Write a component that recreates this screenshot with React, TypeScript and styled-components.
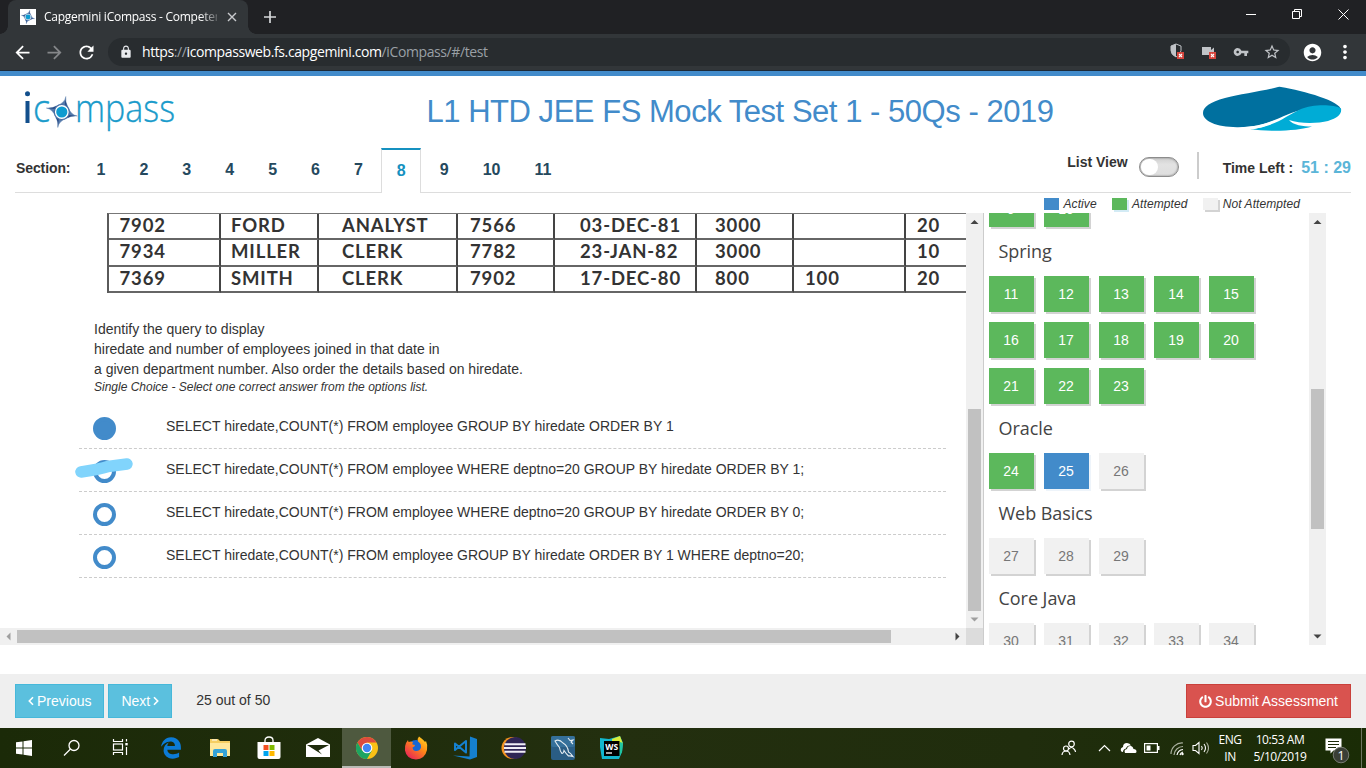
import React from "react";
import styled, { createGlobalStyle, css } from "styled-components";
import {
  MdAccountCircle,
  MdArrowBack,
  MdArrowForward,
  MdLock,
  MdMoreVert,
  MdRefresh,
  MdStarBorder,
  MdVpnKey,
} from "react-icons/md";
import { FaPowerOff } from "react-icons/fa";

const sans = `"Liberation Sans", Arial, sans-serif`;
const ui = `"Open Sans", "Noto Sans", sans-serif`;

const GlobalStyle = createGlobalStyle`
  * { box-sizing: border-box; }
  html, body { margin: 0; padding: 0; overflow: hidden; }
  body { font-family: ${sans}; font-size: 14px; color: #333; background: #fff; }
  svg { display: block; flex: none; }
`;

const Screen = styled.div`
  width: 1366px;
  height: 768px;
  display: flex;
  flex-direction: column;
  overflow: hidden;
  background: #fff;
`;

/* ---------- browser chrome ---------- */

const TabStrip = styled.div`
  flex: none;
  height: 34px;
  background: #202124;
  display: flex;
  color: #fff;
  font-family: ${ui};
`;

const BrowserTab = styled.div`
  position: relative;
  width: 240px;
  height: 34px;
  margin-left: 8px;
  padding: 0 11px 0 12px;
  border-radius: 8px 8px 0 0;
  background: #323639;
  display: flex;
  align-items: center;
  &::before, &::after {
    content: "";
    position: absolute;
    bottom: 0;
    width: 8px;
    height: 8px;
  }
  &::before { left: -8px; background: radial-gradient(circle at 0 0, transparent 7.5px, #323639 8px); }
  &::after { right: -8px; background: radial-gradient(circle at 100% 0, transparent 7.5px, #323639 8px); }
`;

const TabTitle = styled.span`
  flex: 1;
  margin: 0 10px 0 8px;
  overflow: hidden;
  white-space: nowrap;
  font-size: 12px;
  line-height: 18px;
  letter-spacing: -0.26px;
  mask-image: linear-gradient(90deg, #000 156px, transparent 178px);
`;

const NewTab = styled.div`
  margin-left: 16px;
  display: flex;
  align-items: center;
`;

const WindowControls = styled.div`
  margin-left: auto;
  display: flex;
  height: 28px;
`;

const WindowControl = styled.div`
  width: 46px;
  display: flex;
  align-items: center;
  justify-content: center;
`;

const Toolbar = styled.div`
  flex: none;
  height: 37px;
  background: #323639;
  border-bottom: 1px solid #1c2a38;
  display: flex;
  align-items: center;
  color: #fff;
`;

const NavButton = styled.div<{ $dim?: boolean }>`
  width: 32px;
  display: flex;
  justify-content: center;
  color: ${(p) => (p.$dim ? "#85878a" : "#fff")};
`;

const NavButtons = styled.div`
  display: flex;
  padding-left: 6px;
  width: 108px;
`;

const AddressBar = styled.div`
  width: 1182px;
  height: 28px;
  border-radius: 14px;
  background: #282c2f;
  display: flex;
  align-items: center;
  padding: 0 9px 0 11px;
  font-family: ${ui};
  font-size: 14px;
`;

const Url = styled.span`
  margin: 0 0 1px 9px;
  white-space: nowrap;
  color: #9aa0a6;
  letter-spacing: -0.4px;
  b { font-weight: 400; color: #fff; }
`;

const AddressIcons = styled.div`
  margin-left: auto;
  display: flex;
  align-items: center;
  gap: 14px;
  color: #c0c3c7;
`;

const ToolbarEnd = styled.div`
  display: flex;
  align-items: center;
  padding-left: 11.5px;
  gap: 11px;
`;

/* ---------- page header ---------- */

const Page = styled.div`
  flex: none;
  height: 657px;
  border-top: 5px solid #428bca;
  display: flex;
  flex-direction: column;
`;

const Header = styled.header`
  flex: none;
  height: 72px;
  display: flex;
  align-items: flex-start;
  padding: 0 24px 0 20px;
`;

const Title = styled.h1`
  flex: 1;
  margin: 17px 0 0;
  padding-left: 98px;
  text-align: center;
  font-weight: 400;
  font-size: 31px;
  line-height: 38px;
  letter-spacing: -0.47px;
  color: #428bca;
  white-space: nowrap;
`;

const SectionBar = styled.nav`
  flex: none;
  height: 45px;
  margin: 0 15px;
  border-bottom: 1px solid #ddd;
  display: flex;
`;

const SectionLabel = styled.div`
  width: 66px;
  padding: 12px 0 0 1px;
  line-height: 16px;
  font-weight: 700;
  font-size: 14px;
  letter-spacing: -0.1px;
`;

const SectionTab = styled.div<{ $active?: boolean }>`
  height: 45px;
  margin-right: 3px;
  padding: ${(p) => (p.$active ? "12px" : "11px")} 14.5px 0;
  border: 1px solid transparent;
  border-top-width: 2px;
  border-bottom: 0;
  font-weight: 700;
  font-size: 16px;
  line-height: 18px;
  color: #25495e;
  ${(p) =>
    p.$active &&
    css`
      border-color: #ddd;
      border-top-color: #1591c0;
      background: #fff;
      color: #1591c0;
    `}
`;

const BarEnd = styled.div`
  margin-left: auto;
  display: flex;
  font-weight: 700;
`;

const ListViewLabel = styled.span`
  margin-top: 6px;
  line-height: 16px;
`;

const Toggle = styled.div`
  width: 40px;
  height: 20px;
  margin: 9px 18px 0 11px;
  border: 1px solid #8c8c8c;
  border-radius: 10px;
  background: linear-gradient(#cfcfcf, #e2e2e2 35%, #dedede);
  box-shadow: inset 0 0 2px #777;
  &::before {
    content: "";
    display: block;
    width: 17px;
    height: 16px;
    margin: 1px;
    border-radius: 8px;
    background: #fff;
  }
`;

const Divider = styled.div`
  width: 2px;
  height: 27px;
  margin-top: 4px;
  background: #ccc;
`;

const TimeLeft = styled.div`
  margin: 11px 0 0 24px;
  line-height: 18px;
  display: flex;
  white-space: nowrap;
`;

const Countdown = styled.span`
  margin-left: 8px;
  font-size: 16px;
  line-height: 17px;
  color: #5bb5d8;
`;

const Legend = styled.div`
  flex: none;
  height: 20px;
  padding: 4px 66px 0 0;
  display: flex;
  justify-content: flex-end;
  font-style: italic;
  font-size: 12px;
  line-height: 14px;
  letter-spacing: 0.08px;
`;

type TileState = "active" | "done" | "open";

const tileColors: Record<TileState, { bg: string; fg: string; shadow: string }> = {
  active: { bg: "#428bca", fg: "#fff", shadow: "#eef4fa" },
  done: { bg: "#5cb85c", fg: "#fff", shadow: "#d3d3d3" },
  open: { bg: "#f1f1f1", fg: "#777", shadow: "#d3d3d3" },
};

const LegendItem = styled.span<{ $state: TileState }>`
  display: flex;
  margin-left: ${(p) => (p.$state === "active" ? 0 : 15.3)}px;
  &::before {
    content: "";
    width: 15px;
    height: 12px;
    margin-top: 1px;
    margin-right: 5px;
    background: ${(p) => tileColors[p.$state].bg};
    box-shadow: ${(p) =>
      p.$state === "active" ? "none" : p.$state === "done" ? "2px 2px #d3ebf5" : "2px 2px #d3d3d3"};
  }
`;

/* ---------- question area ---------- */

const Body = styled.main`
  flex: none;
  height: 432px;
  display: flex;
  overflow: hidden;
`;

const QuestionPane = styled.section`
  width: 984px;
  height: 432px;
  border-right: 1px solid #ccc;
  display: grid;
  grid-template: 415px 17px / 966px 17px;
`;

const QuestionContent = styled.div`
  overflow: hidden;
`;

const DataTable = styled.div`
  width: 1000px;
  margin-left: 107px;
  display: grid;
  grid-template-columns: 112px 98px 139px 97px 142px 97px 112px 100px;
  grid-template-rows: 26px 27px 26px;
  border-left: 2px solid #5a5a5a;
  border-top: 1px solid #777;
  font-family: Lato, sans-serif;
  font-weight: 700;
  font-size: 18.5px;
  letter-spacing: 0.85px;
  color: #333;
`;

const Cell = styled.div<{ $indent: number }>`
  padding-left: ${(p) => p.$indent}px;
  border-right: 2px solid #444;
  border-bottom: 2px solid #666;
  line-height: 23px;
  white-space: nowrap;
`;

const QuestionText = styled.p`
  margin: 26px 0 0 94px;
  line-height: 20px;
`;

const Hint = styled.p`
  margin: 0 0 0 94px;
  font-size: 12px;
  line-height: 16px;
  font-style: italic;
`;

const Options = styled.div`
  margin: 10.5px 20px 0 79px;
`;

const Option = styled.div`
  position: relative;
  height: 43px;
  padding-left: 14px;
  display: flex;
  border-bottom: 1px dashed #ccc;
`;

const Radio = styled.span<{ $checked?: boolean }>`
  width: 23px;
  height: 23px;
  margin: 11px 50px 0 0;
  border-radius: 50%;
  border: 4px solid #428bca;
  background: ${(p) => (p.$checked ? "#428bca" : "#fff")};
`;

const OptionText = styled.span`
  margin-top: 10px;
  line-height: 20px;
  letter-spacing: 0.01px;
  white-space: nowrap;
`;

const Marker = styled.svg`
  position: absolute;
  left: -6px;
  top: 6px;
`;

/* ---------- scrollbars ---------- */

const Track = styled.div<{ $horizontal?: boolean }>`
  display: flex;
  flex-direction: ${(p) => (p.$horizontal ? "row" : "column")};
  align-items: center;
  justify-content: space-between;
  background: #f0f0f0;
  ${(p) => (p.$horizontal ? "height: 17px;" : "width: 17px;")}
`;

const Thumb = styled.div<{ $horizontal?: boolean; $length: number; $offset: number }>`
  background: #c1c1c1;
  ${(p) =>
    p.$horizontal
      ? css`height: 13px; width: ${p.$length}px; margin-left: ${p.$offset}px; margin-right: auto;`
      : css`width: 13px; height: ${p.$length}px; margin-top: ${p.$offset}px; margin-bottom: auto;`}
`;

const Corner = styled.div`
  background: #dcdcdc;
`;

type Dir = "up" | "down" | "left" | "right";
const arrowPoints: Record<Dir, string> = {
  up: "4.5,11 8.5,7 12.5,11",
  down: "4.5,6.5 8.5,10.5 12.5,6.5",
  left: "10.5,4.5 6.5,8.5 10.5,12.5",
  right: "6.5,4.5 10.5,8.5 6.5,12.5",
};
const Arrow = ({ dir, dim }: { dir: Dir; dim?: boolean }) => (
  <svg width="17" height="17">
    <polygon points={arrowPoints[dir]} fill={dim ? "#9f9f9f" : "#444"} />
  </svg>
);

/* ---------- palette of questions ---------- */

const Palette = styled.aside`
  width: 325px;
  height: 432px;
  padding-left: 5px;
  overflow: hidden;
`;

const TileGrid = styled.div<{ $clipped?: boolean }>`
  display: grid;
  grid-template-columns: repeat(5, 45px);
  grid-auto-rows: 36px;
  gap: 10px;
  ${(p) => p.$clipped && "margin-top: -22px;"}
`;

const Tile = styled.div<{ $state: TileState }>`
  padding-right: 1px;
  line-height: 36px;
  text-align: center;
  background: ${(p) => tileColors[p.$state].bg};
  color: ${(p) => tileColors[p.$state].fg};
  box-shadow: 2px 2px ${(p) => tileColors[p.$state].shadow};
`;

const TopicName = styled.h2`
  height: 49px;
  margin: 0;
  padding-left: 9.5px;
  font-family: ${ui};
  font-weight: 400;
  font-size: 18px;
  line-height: 48px;
  letter-spacing: -0.04px;
  color: #444;
`;

/* ---------- footer ---------- */

const Footer = styled.footer`
  flex: none;
  height: 54px;
  margin-top: 29px;
  padding: 0 15px;
  background: #efefef;
  display: flex;
  align-items: center;
`;

const Button = styled.button<{ $danger?: boolean }>`
  height: 34px;
  margin: 0 4px 0 0;
  padding: 0 12px;
  border: 1px solid ${(p) => (p.$danger ? "#c9403b" : "#46b8da")};
  background: ${(p) => (p.$danger ? "#d9534f" : "#5bc0de")};
  color: #fff;
  font: 14px/20px ${sans};
  display: flex;
  align-items: center;
  gap: ${(p) => (p.$danger ? 3.5 : 3)}px;
  white-space: nowrap;
  ${(p) => p.$danger && "margin: 0 0 0 auto;"}
`;

const Progress = styled.span`
  margin: 0 0 2px 20px;
`;

/* ---------- taskbar ---------- */

const Taskbar = styled.div`
  flex: none;
  height: 40px;
  background: linear-gradient(90deg, #1b2a08, #232f0f 45%, #202d0d 75%, #1a2c06);
  display: flex;
  color: #fff;
  font-family: ${ui};
`;

const SystemButton = styled.div`
  width: 48px;
  display: flex;
  align-items: center;
  justify-content: center;
`;

const AppButton = styled.div<{ $current?: boolean }>`
  width: 49px;
  display: flex;
  align-items: center;
  justify-content: center;
  ${(p) => p.$current && "background: #4e593f; box-shadow: inset 0 -2px #b9bbb6;"}
`;

const Apps = styled.div`
  display: flex;
  margin-left: 2px;
`;

const Tray = styled.div`
  margin-left: auto;
  display: flex;
  align-items: center;
`;

const TrayCell = styled.div<{ $width: number }>`
  width: ${(p) => p.$width}px;
  display: flex;
  justify-content: center;
`;

const TrayText = styled.div<{ $width: number }>`
  width: ${(p) => p.$width}px;
  text-align: center;
  font-size: 12px;
  line-height: 17px;
  letter-spacing: -0.42px;
  white-space: nowrap;
`;

const DesktopEdge = styled.div`
  width: 5px;
  height: 40px;
  border-left: 1px solid #6b7560;
`;

/* ---------- drawings ---------- */

const Star = ({ cx, cy, s }: { cx: number; cy: number; s: number }) => (
  <g transform={`translate(${cx} ${cy}) scale(${s})`}>
    <path
      d="M4-15.500Q3.500-9 6-5.500Q9 3 15.500 4Q9 3.500 5.500 6Q-3 9-4 15.500Q-3.500 9-6 5.500Q-9-3-15.500-4Q-9-3.500-5.500-6Q3-9 4-15.500Z"
      fill="#5479ab"
      stroke="#7d9abf"
      strokeWidth="0.500"
    />
    <path
      d="M4-15.500Q3.500-9 6-5.500L3-7ZM15.500 4Q9 3.500 5.500 6L7 3ZM-4 15.500Q-3.500 9-6 5.500L-3 7ZM-15.500-4Q-9-3.500-5.500-6L-7-3Z"
      fill="#274a85"
    />
    <circle r="7.500" fill="#fff" stroke="#476da3" strokeWidth="1.200" />
    <circle r="5.600" fill="#0d9bd0" />
  </g>
);

const Logo = () => (
  <svg width="160" height="72" viewBox="20 76 160 72">
    <circle cx="27.500" cy="93.800" r="2.500" fill="#124f8c" />
    <rect x="25.500" y="101" width="4" height="22" fill="#124f8c" />
    <g fontFamily="Open Sans" fontWeight="300" fontSize="39" fill="#1a9bcb" stroke="#1a9bcb" strokeWidth="0.350">
      <text x="33" y="122" textLength="17" lengthAdjust="spacingAndGlyphs">c</text>
      <text x="75" y="122" textLength="100" lengthAdjust="spacingAndGlyphs">mpass</text>
    </g>
    <Star cx={61.8} cy={112} s={1} />
  </svg>
);

const Brand = () => (
  <svg width="140" height="72" viewBox="1202 76 140 72">
    <path d="M1278 87 C1264 91 1240 94 1225 98 C1210 102 1203 107 1203 113 C1203 121 1216 127 1237 127.200 C1270 127.500 1283 113 1306 109 C1322 106 1336 106 1341 110 C1341 101 1304 91 1281 87Q1279.500 86.600 1278 87Z" fill="#00709f" />
    <path d="M1341 108.500 C1334 104 1312 104 1301 109 C1285 116 1277 126.500 1250 129 C1270 132 1298 131 1312 126.500 C1303 126.500 1293 125 1289 120 C1300 124 1318 123.500 1328 121 C1338 118 1342 114 1341 108.500Z" fill="#00acd6" />
    <path d="M1240 127.200 C1255 127 1265 124.500 1274 120.500 C1268 125.500 1262 128 1253 129.200 L1250 128.500Z" fill="#fff" />
  </svg>
);

const BlockedBadge = () => (
  <g>
    <rect x="8" y="9" width="7" height="7" fill="#d6453d" />
    <path d="M10 11l3 3M13 11l-3 3" stroke="#fff" strokeWidth="1.100" />
  </g>
);

const WindowsIcon = () => (
  <svg width="16" height="16" fill="#fff">
    <path d="M0 2.300l6.500-.9v6.100H0zM7.500 1.200L16 0v7.500H7.500zM0 8.500h6.500v6.100L0 13.700zM7.500 8.500H16V16l-8.500-1.200z" />
  </svg>
);

const SearchIcon = () => (
  <svg width="18" height="18" fill="none" stroke="#fff" strokeWidth="1.300">
    <circle cx="11" cy="6.500" r="5" />
    <path d="M7.500 10L1 16.500" />
  </svg>
);

const TaskViewIcon = () => (
  <svg width="18" height="18" viewBox="-1 1 18 18" fill="none" stroke="#fff" strokeWidth="1.200">
    <path d="M1.500 1v2.500h9V1M1.500 17v-2.500h9V17M14.500 1v2.500M14.500 9v8" />
    <rect x="1.500" y="6" width="9" height="6" />
    <rect x="13.300" y="5" width="2.400" height="2.400" fill="#fff" stroke="none" />
  </svg>
);

const BrowserIcon = () => (
  <svg width="22" height="22" viewBox="0 0 512 512" fill="#0c7bd6">
    <path d="M486.290 243.670c0-44-7.760-84.460-28.810-122.400C416.500 47.880 343.910 8 258.890 8 119 7.720 40.620 113.210 26.060 227.680c42.420-61.310 117.070-121.380 220.370-125 0 0 109.670 0 99.420 105H170c6.370-37.390 18.550-59 34.340-78.930-75.050 34.900-121.850 96.100-120.750 188.320.83 71.450 50.130 144.840 120.750 172 83.350 31.840 192.770 7.200 240.130-21.330V363.310C363.600 419.800 173.600 424.230 172.210 295.740H486.290z" />
  </svg>
);

const ExplorerIcon = () => (
  <svg width="22" height="20">
    <path d="M1 1h8l2 2h10v15H1z" fill="#f5ce62" />
    <path d="M1 5h20v13H1z" fill="#ffe89c" />
    <path d="M4 19v-6q0-2 2-2h10q2 0 2 2v6h-4v-4H8v4z" fill="#35a3d8" />
    <path d="M3 2h5" stroke="#fff" />
  </svg>
);

const StoreIcon = () => (
  <svg width="24" height="24">
    <path d="M8 6V4.500Q8 1 12 1t4 3.500V6" fill="none" stroke="#fff" strokeWidth="1.300" />
    <path d="M.5 6h23v15q0 2-2 2h-19q-2 0-2-2z" fill="#fff" />
    <path d="M6.500 9h5v5h-5z" fill="#f25022" />
    <path d="M12.500 9h5v5h-5z" fill="#7fba00" />
    <path d="M6.500 15h5v5h-5z" fill="#00a4ef" />
    <path d="M12.500 15h5v5h-5z" fill="#ffb900" />
  </svg>
);

const MailIcon = () => (
  <svg width="24" height="20">
    <path d="M0 6.500L12 0l12 6.500V19H0z" fill="#fff" />
    <path d="M1 7h22l-10.500 5.500 3.500 4z" fill="#1f2c0c" />
  </svg>
);

const ChromeIcon = () => (
  <svg width="22" height="22" viewBox="-11 -11 22 22">
    <circle r="11" fill="#fbc116" />
    <path d="M-9.530-5.500A11 11 0 0 1 9.530-5.500L0-5.500 L-4.760 2.750Z" fill="#dd4b3e" />
    <path d="M-9.530-5.500A11 11 0 0 0 0 11L4.760 2.750-4.760 2.750Z" fill="#1da462" />
    <circle r="5.300" fill="#fff" />
    <circle r="4.200" fill="#4285f4" />
  </svg>
);

const FirefoxIcon = () => (
  <svg width="24" height="24" viewBox="0 0 24 24">
    <defs>
      <linearGradient id="fox" x1="1" y1="0" x2="0.200" y2="1">
        <stop offset="0" stopColor="#ffe226" />
        <stop offset="0.450" stopColor="#ff8a16" />
        <stop offset="1" stopColor="#e8205a" />
      </linearGradient>
    </defs>
    <circle cx="12" cy="12" r="8" fill="#1767d3" />
    <path d="M2 7l2-3 .5 2Q7 5 9 6q-1 1.500-.5 2.500l2.500.5q0 1.500-2.500 2.500Q9 15 12 15q4 0 5-3.500.5-4-3-6Q13 2.500 15 .5 20 4 21 6l1-1q2 4 1 9-2 9-11 9.500Q2.500 23 1 14.500.5 10 2 7z" fill="url(#fox)" />
  </svg>
);

const CodeIcon = () => (
  <svg width="24" height="24">
    <path d="M17 .5L24 3v18l-7 2.500-17-4 16.500 1z" fill="#1580cf" />
    <path d="M2 7.500l11 9V5L2 14z" fill="none" stroke="#1580cf" strokeWidth="2" strokeLinejoin="round" />
  </svg>
);

const EclipseIcon = () => (
  <svg width="26" height="24">
    <circle cx="11.500" cy="12" r="11" fill="#f39320" />
    <circle cx="14" cy="12" r="11" fill="#2f2555" />
    <path d="M3.500 8.300h21M3 12h22M3.500 15.700h21" stroke="#f1eef6" strokeWidth="2" />
  </svg>
);

const DolphinIcon = () => (
  <svg width="24" height="24">
    <rect width="24" height="24" rx="2" fill="#2a5d84" />
    <rect width="24" height="11" rx="2" fill="#35709a" />
    <path d="M4 5q4-2.500 8 2 5 3 5.500 9 2 1 4.500 4.500-2.500-1-4.500-.5-3-3-4.500-5.500-.5 3-2 3-2-2-2.500-6-2.500-3-4.500-6.500zM17 2l2 2.500 3-.5-2 2 2 2" fill="none" stroke="#e5edf2" strokeWidth="1.100" />
  </svg>
);

const StormIcon = () => (
  <svg width="26" height="24">
    <path d="M1 2l9 1L21 0l3 7-1 9-3 7H3L1 11z" fill="#12b7ce" />
    <path d="M13 3l8-3 3 8-4 2-7-1z" fill="#d9ed38" />
    <path d="M21 6l3 1-1 9-3 5z" fill="#22c6a0" />
    <rect x="5" y="5" width="15.500" height="15" fill="#000" />
    <text x="6.200" y="13.500" fill="#fff" fontFamily="Open Sans" fontWeight="700" fontSize="8.500" textLength="13">WS</text>
    <path d="M7 17h6" stroke="#fff" strokeWidth="1.300" />
  </svg>
);

const PeopleIcon = () => (
  <svg width="16" height="16" fill="none" stroke="#fff" strokeWidth="1.200">
    <circle cx="10.500" cy="4" r="2.800" />
    <path d="M8 9q2.500-3 5 0 1.500 1.500 1.500 3" />
    <circle cx="5" cy="8.500" r="2.500" />
    <path d="M1 15q.5-4 4-4t4 4" />
  </svg>
);

const WifiIcon = () => (
  <svg width="15" height="15" viewBox="-1 0 15 15" fill="none" strokeWidth="1.200">
    <path d="M1 13A11 11 0 0 1 13 2M4 14A9 9 0 0 1 13 5.500" stroke="#aab09f" />
    <path d="M7 14A7 7 0 0 1 13 8.500M10 14a4 4 0 0 1 3-3" stroke="#fff" />
    <circle cx="12.500" cy="13" r="1.200" fill="#fff" />
  </svg>
);

const SoundIcon = () => (
  <svg width="18" height="14" viewBox="-1 0 18 14" fill="none" stroke="#fff" strokeWidth="1.100">
    <path d="M1 4.500h2.500L7 1.500v11L3.500 9.500H1zM9.500 5q1.500 2 0 4M12 3q3 4 0 8" />
    <path d="M14.500 1.500q4 5.500 0 11" stroke="#aab09f" />
  </svg>
);

const NoticeIcon = () => (
  <svg width="26" height="32" viewBox="0 -1 26 32">
    <path d="M1.500 5.500h16v12H9.500l-3 3v-3h-5z" fill="#fff" />
    <path d="M4 8.500h11M4 11.500h11M4 14.500h8" stroke="#1c2b0a" strokeWidth="1.100" />
    <circle cx="17" cy="22" r="7.800" fill="#3a3f36" stroke="#777b72" />
    <text x="17" y="26.500" textAnchor="middle" fill="#fff" fontFamily="Open Sans" fontSize="12.500">1</text>
  </svg>
);

const Chevron = ({ left }: { left?: boolean }) => (
  <svg width="6" height="10" viewBox="0 0 6 10" fill="none" stroke="#fff" strokeWidth="1.600">
    <path d={left ? "M5 1.200L1.300 5 5 8.800" : "M1 1.200L4.700 5 1 8.800"} />
  </svg>
);

/* ---------- data ---------- */

const rows = [
  ["7902", "FORD", "ANALYST", "7566", "03-DEC-81", "3000", "", "20"],
  ["7934", "MILLER", "CLERK", "7782", "23-JAN-82", "3000", "", "10"],
  ["7369", "SMITH", "CLERK", "7902", "17-DEC-80", "800", "100", "20"],
];
const indents = [10.5, 10, 23, 12, 25, 18, 11, 11];

const options = [
  "SELECT hiredate,COUNT(*) FROM employee GROUP BY hiredate ORDER BY 1",
  "SELECT hiredate,COUNT(*) FROM employee WHERE deptno=20 GROUP BY hiredate ORDER BY 1;",
  "SELECT hiredate,COUNT(*) FROM employee WHERE deptno=20 GROUP BY hiredate ORDER BY 0;",
  "SELECT hiredate,COUNT(*) FROM employee GROUP BY hiredate ORDER BY 1 WHERE deptno=20;",
];

const topics = [
  { name: "", from: 9, to: 10 },
  { name: "Spring", from: 11, to: 23 },
  { name: "Oracle", from: 24, to: 26 },
  { name: "Web Basics", from: 27, to: 29 },
  { name: "Core Java", from: 30, to: 34 },
];

const stateOf = (n: number): TileState => (n < 25 ? "done" : n === 25 ? "active" : "open");
const range = (a: number, b: number) => Array.from({ length: b - a + 1 }, (_, i) => a + i);

export default function App() {
  return (
    <Screen>
      <GlobalStyle />
      <TabStrip>
        <BrowserTab>
          <svg width="16" height="16" viewBox="-18 -18 36 36">
            <rect x="-18" y="-18" width="36" height="36" fill="#fff" />
            <Star cx={0} cy={0} s={1} />
          </svg>
          <TabTitle>Capgemini iCompass - Competency</TabTitle>
          <svg width="10" height="10" stroke="#c9cbce" strokeWidth="1.400">
            <path d="M1 1l8 8M9 1l-8 8" />
          </svg>
        </BrowserTab>
        <NewTab>
          <svg width="12" height="12" stroke="#d5d7d9" strokeWidth="1.700">
            <path d="M6 0v12M0 6h12" />
          </svg>
        </NewTab>
        <WindowControls>
          <WindowControl>
            <svg width="10" height="10"><path d="M0 5.500h10" stroke="#fff" /></svg>
          </WindowControl>
          <WindowControl>
            <svg width="10" height="10" fill="none" stroke="#fff">
              <path d="M.5 2.500h7v7h-7zM2.500 2.500v-2h7v7h-2" />
            </svg>
          </WindowControl>
          <WindowControl>
            <svg width="11" height="11" stroke="#fff"><path d="M.5.5l10 10M10.500.5l-10 10" /></svg>
          </WindowControl>
        </WindowControls>
      </TabStrip>
      <Toolbar>
        <NavButtons>
          <NavButton><MdArrowBack size={21} /></NavButton>
          <NavButton $dim><MdArrowForward size={21} /></NavButton>
          <NavButton><MdRefresh size={21} /></NavButton>
        </NavButtons>
        <AddressBar>
          <MdLock size={14} color="#e8eaed" />
          <Url><b>https</b>://<b>icompassweb.fs.capgemini.com</b>/iCompass/#/test</Url>
          <AddressIcons>
            <svg width="18" height="18" viewBox="0 0 18 18">
              <path d="M7 1l5 2v4.500q0 4-5 6.500Q2 11.500 2 7.500V3z" fill="none" stroke="#c0c3c7" />
              <path d="M7 1v13Q2 11.500 2 7.500V3z" fill="#c0c3c7" />
              <BlockedBadge />
            </svg>
            <svg width="18" height="18" viewBox="0 0 18 18">
              <path d="M1 4h9v3l3-2.500V12H1z" fill="#c0c3c7" />
              <BlockedBadge />
            </svg>
            <MdVpnKey size={16} />
            <MdStarBorder size={18} />
          </AddressIcons>
        </AddressBar>
        <ToolbarEnd>
          <MdAccountCircle size={21} />
          <MdMoreVert size={22} />
        </ToolbarEnd>
      </Toolbar>
      <Page>
        <Header>
          <Logo />
          <Title>L1 HTD JEE FS Mock Test Set 1 - 50Qs - 2019</Title>
          <Brand />
        </Header>
        <SectionBar>
          <SectionLabel>Section:</SectionLabel>
          {range(1, 11).map((n) => (
            <SectionTab key={n} $active={n === 8}>{n}</SectionTab>
          ))}
          <BarEnd>
            <ListViewLabel>List View</ListViewLabel>
            <Toggle />
            <Divider />
            <TimeLeft>Time Left : <Countdown>51 : 29</Countdown></TimeLeft>
          </BarEnd>
        </SectionBar>
        <Legend>
          <LegendItem $state="active">Active</LegendItem>
          <LegendItem $state="done">Attempted</LegendItem>
          <LegendItem $state="open">Not Attempted</LegendItem>
        </Legend>
        <Body>
          <QuestionPane>
            <QuestionContent>
              <DataTable>
                {rows.map((r, i) =>
                  r.map((v, j) => <Cell key={`${i}-${j}`} $indent={indents[j]}>{v}</Cell>)
                )}
              </DataTable>
              <QuestionText>
                Identify the query to display<br />
                hiredate and number of employees joined in that date in<br />
                a given department number. Also order the details based on hiredate.
              </QuestionText>
              <Hint>Single Choice - Select one correct answer from the options list.</Hint>
              <Options>
                {options.map((text, i) => (
                  <Option key={i}>
                    <Radio $checked={i === 0} />
                    <OptionText>{text}</OptionText>
                    {i === 1 && (
                      <Marker width="64" height="26">
                        <path d="M8 17Q28 14 35 11.500L54 9" fill="none" stroke="#81d4fc" strokeWidth="11.500" strokeLinecap="round" strokeLinejoin="round" />
                      </Marker>
                    )}
                  </Option>
                ))}
              </Options>
            </QuestionContent>
            <Track>
              <Arrow dir="up" />
              <Thumb $length={202} $offset={179} />
              <Arrow dir="down" dim />
            </Track>
            <Track $horizontal>
              <Arrow dir="left" dim />
              <Thumb $horizontal $length={874} $offset={0} />
              <Arrow dir="right" />
            </Track>
            <Corner />
          </QuestionPane>
          <Palette>
            {topics.map((t) => (
              <React.Fragment key={t.from}>
                {t.name && <TopicName>{t.name}</TopicName>}
                <TileGrid $clipped={!t.name}>
                  {range(t.from, t.to).map((n) => (
                    <Tile key={n} $state={stateOf(n)}>{n}</Tile>
                  ))}
                </TileGrid>
              </React.Fragment>
            ))}
          </Palette>
          <Track>
            <Arrow dir="up" />
            <Thumb $length={140} $offset={159} />
            <Arrow dir="down" />
          </Track>
        </Body>
        <Footer>
          <Button><Chevron left />Previous</Button>
          <Button>Next<Chevron /></Button>
          <Progress>25 out of 50</Progress>
          <Button $danger><FaPowerOff size={13} />Submit Assessment</Button>
        </Footer>
      </Page>
      <Taskbar>
        <SystemButton><WindowsIcon /></SystemButton>
        <SystemButton><SearchIcon /></SystemButton>
        <SystemButton><TaskViewIcon /></SystemButton>
        <Apps>
          <AppButton><BrowserIcon /></AppButton>
          <AppButton><ExplorerIcon /></AppButton>
          <AppButton><StoreIcon /></AppButton>
          <AppButton><MailIcon /></AppButton>
          <AppButton $current><ChromeIcon /></AppButton>
          <AppButton><FirefoxIcon /></AppButton>
          <AppButton><CodeIcon /></AppButton>
          <AppButton><EclipseIcon /></AppButton>
          <AppButton><DolphinIcon /></AppButton>
          <AppButton><StormIcon /></AppButton>
        </Apps>
        <Tray>
          <TrayCell $width={46}><PeopleIcon /></TrayCell>
          <TrayCell $width={24}>
            <svg width="13" height="8" fill="none" stroke="#fff" strokeWidth="1.200"><path d="M1 7l5.500-5.500L12 7" /></svg>
          </TrayCell>
          <TrayCell $width={24}>
            <svg width="17" height="12" fill="#fff">
              <path d="M1 9q-1-3 2-4 0-4 4-4 3 0 4 2.500-4-.5-5 3-3 .5-3 3.500-1.500 0-2-1z" />
              <path d="M5 11q-1.500-3.500 2-4 .5-3.500 4-3 2 .5 2.500 3 3 0 3 2.500 0 1.500-1.500 1.500z" />
            </svg>
          </TrayCell>
          <TrayCell $width={24}>
            <svg width="16" height="10"><rect x=".6" y=".6" width="12.800" height="8.800" fill="none" stroke="#fff" strokeWidth="1.200" /><path d="M2.500 2.500h4v5h-4zM14 3h1.500v4H14z" fill="#fff" /></svg>
          </TrayCell>
          <TrayCell $width={24}><WifiIcon /></TrayCell>
          <TrayCell $width={24}><SoundIcon /></TrayCell>
          <TrayText $width={36}>ENG<br />IN</TrayText>
          <TrayText $width={64}>10:53 AM<br />5/10/2019</TrayText>
          <TrayCell $width={49}><NoticeIcon /></TrayCell>
          <DesktopEdge />
        </Tray>
      </Taskbar>
    </Screen>
  );
}
